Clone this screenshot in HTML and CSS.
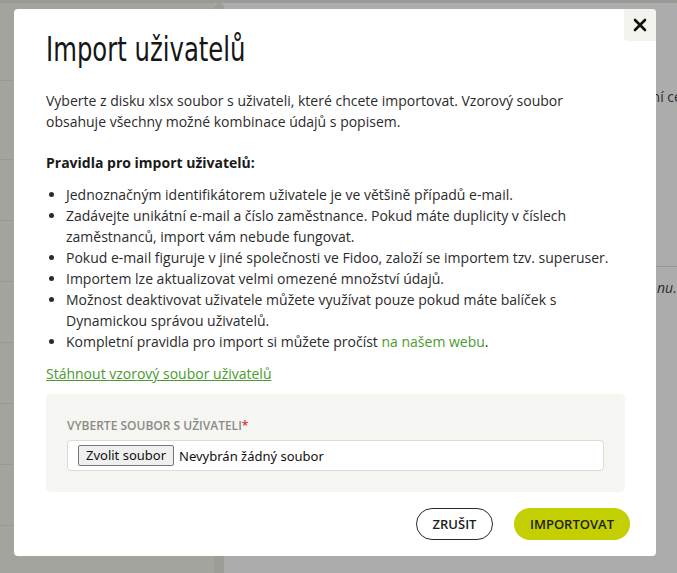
FILE: index.html
```html
<!DOCTYPE html>
<html lang="cs">
<head>
    <meta charset="UTF-8">
    <meta name="viewport" content="width=device-width, initial-scale=1.0">
    <title>Import uživatelů</title>
    <link rel="stylesheet" href="styles.css">
</head>
<body>
    <div class="page">
        <aside class="sidebar">
            <div class="side-row"></div>
            <div class="side-row"></div>
            <div class="side-row"></div>
            <div class="side-row"></div>
            <div class="side-row"></div>
            <div class="side-row"></div>
            <div class="side-row"></div>
            <div class="side-row"></div>
        </aside>
        <div class="side-strip"></div>
        <main class="main">
            <p class="main-text first">Nastavení cen a limitů</p>
            <div class="main-rule"></div>
            <p class="main-text italic">nu.</p>
        </main>
    </div>

    <div class="overlay">
        <div class="modal">
            <button class="close-btn" aria-label="Zavřít">
                <svg width="14" height="14" viewBox="0 0 14 14">
                    <path d="M2 2 L12 12 M12 2 L2 12" stroke="#111" stroke-width="2.6" stroke-linecap="round"/>
                </svg>
            </button>

            <div class="modal-body">
                <h1 class="modal-title"><span>Import uživatelů</span></h1>
                <p>Vyberte z disku xlsx soubor s uživateli, které chcete importovat. Vzorový soubor obsahuje všechny možné kombinace údajů s popisem.</p>

                <p class="rules-title">Pravidla pro import uživatelů:</p>
                <ul class="rules">
                    <li>Jednoznačným identifikátorem uživatele je ve většině případů e-mail.</li>
                    <li>Zadávejte unikátní e-mail a číslo zaměstnance. Pokud máte duplicity v číslech zaměstnanců, import vám nebude fungovat.</li>
                    <li>Pokud e-mail figuruje v jiné společnosti ve Fidoo, založí se importem tzv. superuser.</li>
                    <li>Importem lze aktualizovat velmi omezené množství údajů.</li>
                    <li>Možnost deaktivovat uživatele můžete využívat pouze pokud máte balíček s Dynamickou správou uživatelů.</li>
                    <li>Kompletní pravidla pro import si můžete pročíst <a href="#" class="link">na našem webu</a>.</li>
                </ul>

                <a href="#" class="download">Stáhnout vzorový soubor uživatelů</a>

                <div class="upload-box">
                    <div class="field-label">Vyberte soubor s uživateli<span class="required">*</span></div>
                    <label class="file-field">
                        <span class="file-btn">Zvolit soubor</span>
                        <span class="file-name">Nevybrán žádný soubor</span>
                    </label>
                </div>
            </div>

            <div class="modal-footer">
                <button class="btn btn-outline">Zrušit</button>
                <button class="btn btn-primary">Importovat</button>
            </div>
        </div>
    </div>
</body>
</html>
```

FILE: styles.css
```css
* {
    box-sizing: border-box;
}
body {
    margin: 0;
    font-family: "Open Sans", Arial, sans-serif;
    font-size: 14px;
    color: #2b2b2b;
    background: #ffffff;
    overflow: hidden;
}
.page {
    display: flex;
    height: 573px;
    border-top: 3px solid #e4e5dd;
}
.sidebar {
    flex: 0 0 214px;
    background: #f2f3ea;
    padding-top: 77px;
}
.side-row {
    height: 61px;
    border-top: 1px solid #e2e3da;
}
.side-row:first-child {
    height: 79px;
}
.side-strip {
    flex: 0 0 10px;
    background: #e8e9e0;
    border-radius: 6px 6px 0 0;
}
.main {
    flex: 1;
    min-width: 0;
    overflow: hidden;
    background: #ffffff;
    white-space: nowrap;
}
.main-text {
    margin: 0;
    color: #444;
    font-size: 14px;
    line-height: 20px;
    padding-left: 375px;
}
.main-text.first {
    margin-top: 84px;
}
.main-rule {
    margin-top: 159px;
    border-top: 1px solid #e2e3da;
}
.main-text.italic {
    margin-top: 11px;
    font-style: italic;
    padding-left: 433px;
}

.overlay {
    position: fixed;
    inset: 0;
    background: rgba(0, 0, 0, 0.326);
}
.modal {
    position: absolute;
    left: 14px;
    top: 9px;
    width: 642px;
    height: 547px;
    background: #ffffff;
    border-radius: 4px;
}
.close-btn {
    position: absolute;
    top: 0;
    right: 0;
    width: 32px;
    height: 32px;
    border: none;
    background: #f4f4ef;
    border-radius: 0 4px 0 4px;
    display: flex;
    align-items: center;
    justify-content: center;
    padding: 0;
    cursor: pointer;
}
.modal-body {
    padding: 20px 31px 0 32px;
}
.modal-title {
    margin: 0 0 19px;
    font-family: "DejaVu Sans Condensed", "DejaVu Sans", sans-serif;
    font-weight: 400;
    font-size: 33px;
    line-height: 42px;
    color: #161616;
}
.modal-title span {
    display: inline-block;
    transform: scaleX(0.82);
    transform-origin: left center;
}
.modal-body p {
    margin: 0;
    line-height: 21px;
}
.modal-body .rules-title {
    margin-top: 20px;
    font-weight: 700;
    color: #1a1a1a;
}
.rules {
    margin: 11px 0 11px;
    padding-left: 20px;
    line-height: 21px;
}
.link,
.download {
    color: #4a9a2c;
    text-decoration: none;
}
.download {
    display: block;
    text-decoration: underline;
    line-height: 21px;
}
.upload-box {
    margin-top: 10px;
    background: #f5f5f1;
    border-radius: 5px;
    padding: 23px 21px 21px;
}
.field-label {
    font-size: 12px;
    line-height: 18px;
    text-transform: uppercase;
    color: #8b8b86;
    font-weight: 600;
    margin-bottom: 5px;
}
.required {
    color: #d9342b;
}
.file-field {
    display: flex;
    align-items: center;
    height: 31px;
    background: #ffffff;
    border: 1px solid #dcdcd6;
    border-radius: 4px;
    padding: 0 10px;
    font-family: "Noto Sans", "Open Sans", sans-serif;
    font-size: 13px;
    color: #111;
}
.file-btn {
    background: #efefef;
    border: 1px solid #767676;
    border-radius: 2px;
    padding: 0 7px;
    line-height: 19px;
    margin-right: 5px;
}
.modal-footer {
    display: flex;
    justify-content: flex-end;
    gap: 21px;
    padding: 16px 26px 0 0;
}
.btn {
    height: 32px;
    border-radius: 16px;
    font-family: "Open Sans", Arial, sans-serif;
    font-size: 13px;
    font-weight: 600;
    text-transform: uppercase;
    cursor: pointer;
    padding: 0 15px;
    color: #1e1e1e;
}
.btn-outline {
    width: 77px;
    background: #ffffff;
    border: 1px solid #2a2a2a;
}
.btn-primary {
    width: 116px;
    background: #c3cf00;
    border: none;
}
```
